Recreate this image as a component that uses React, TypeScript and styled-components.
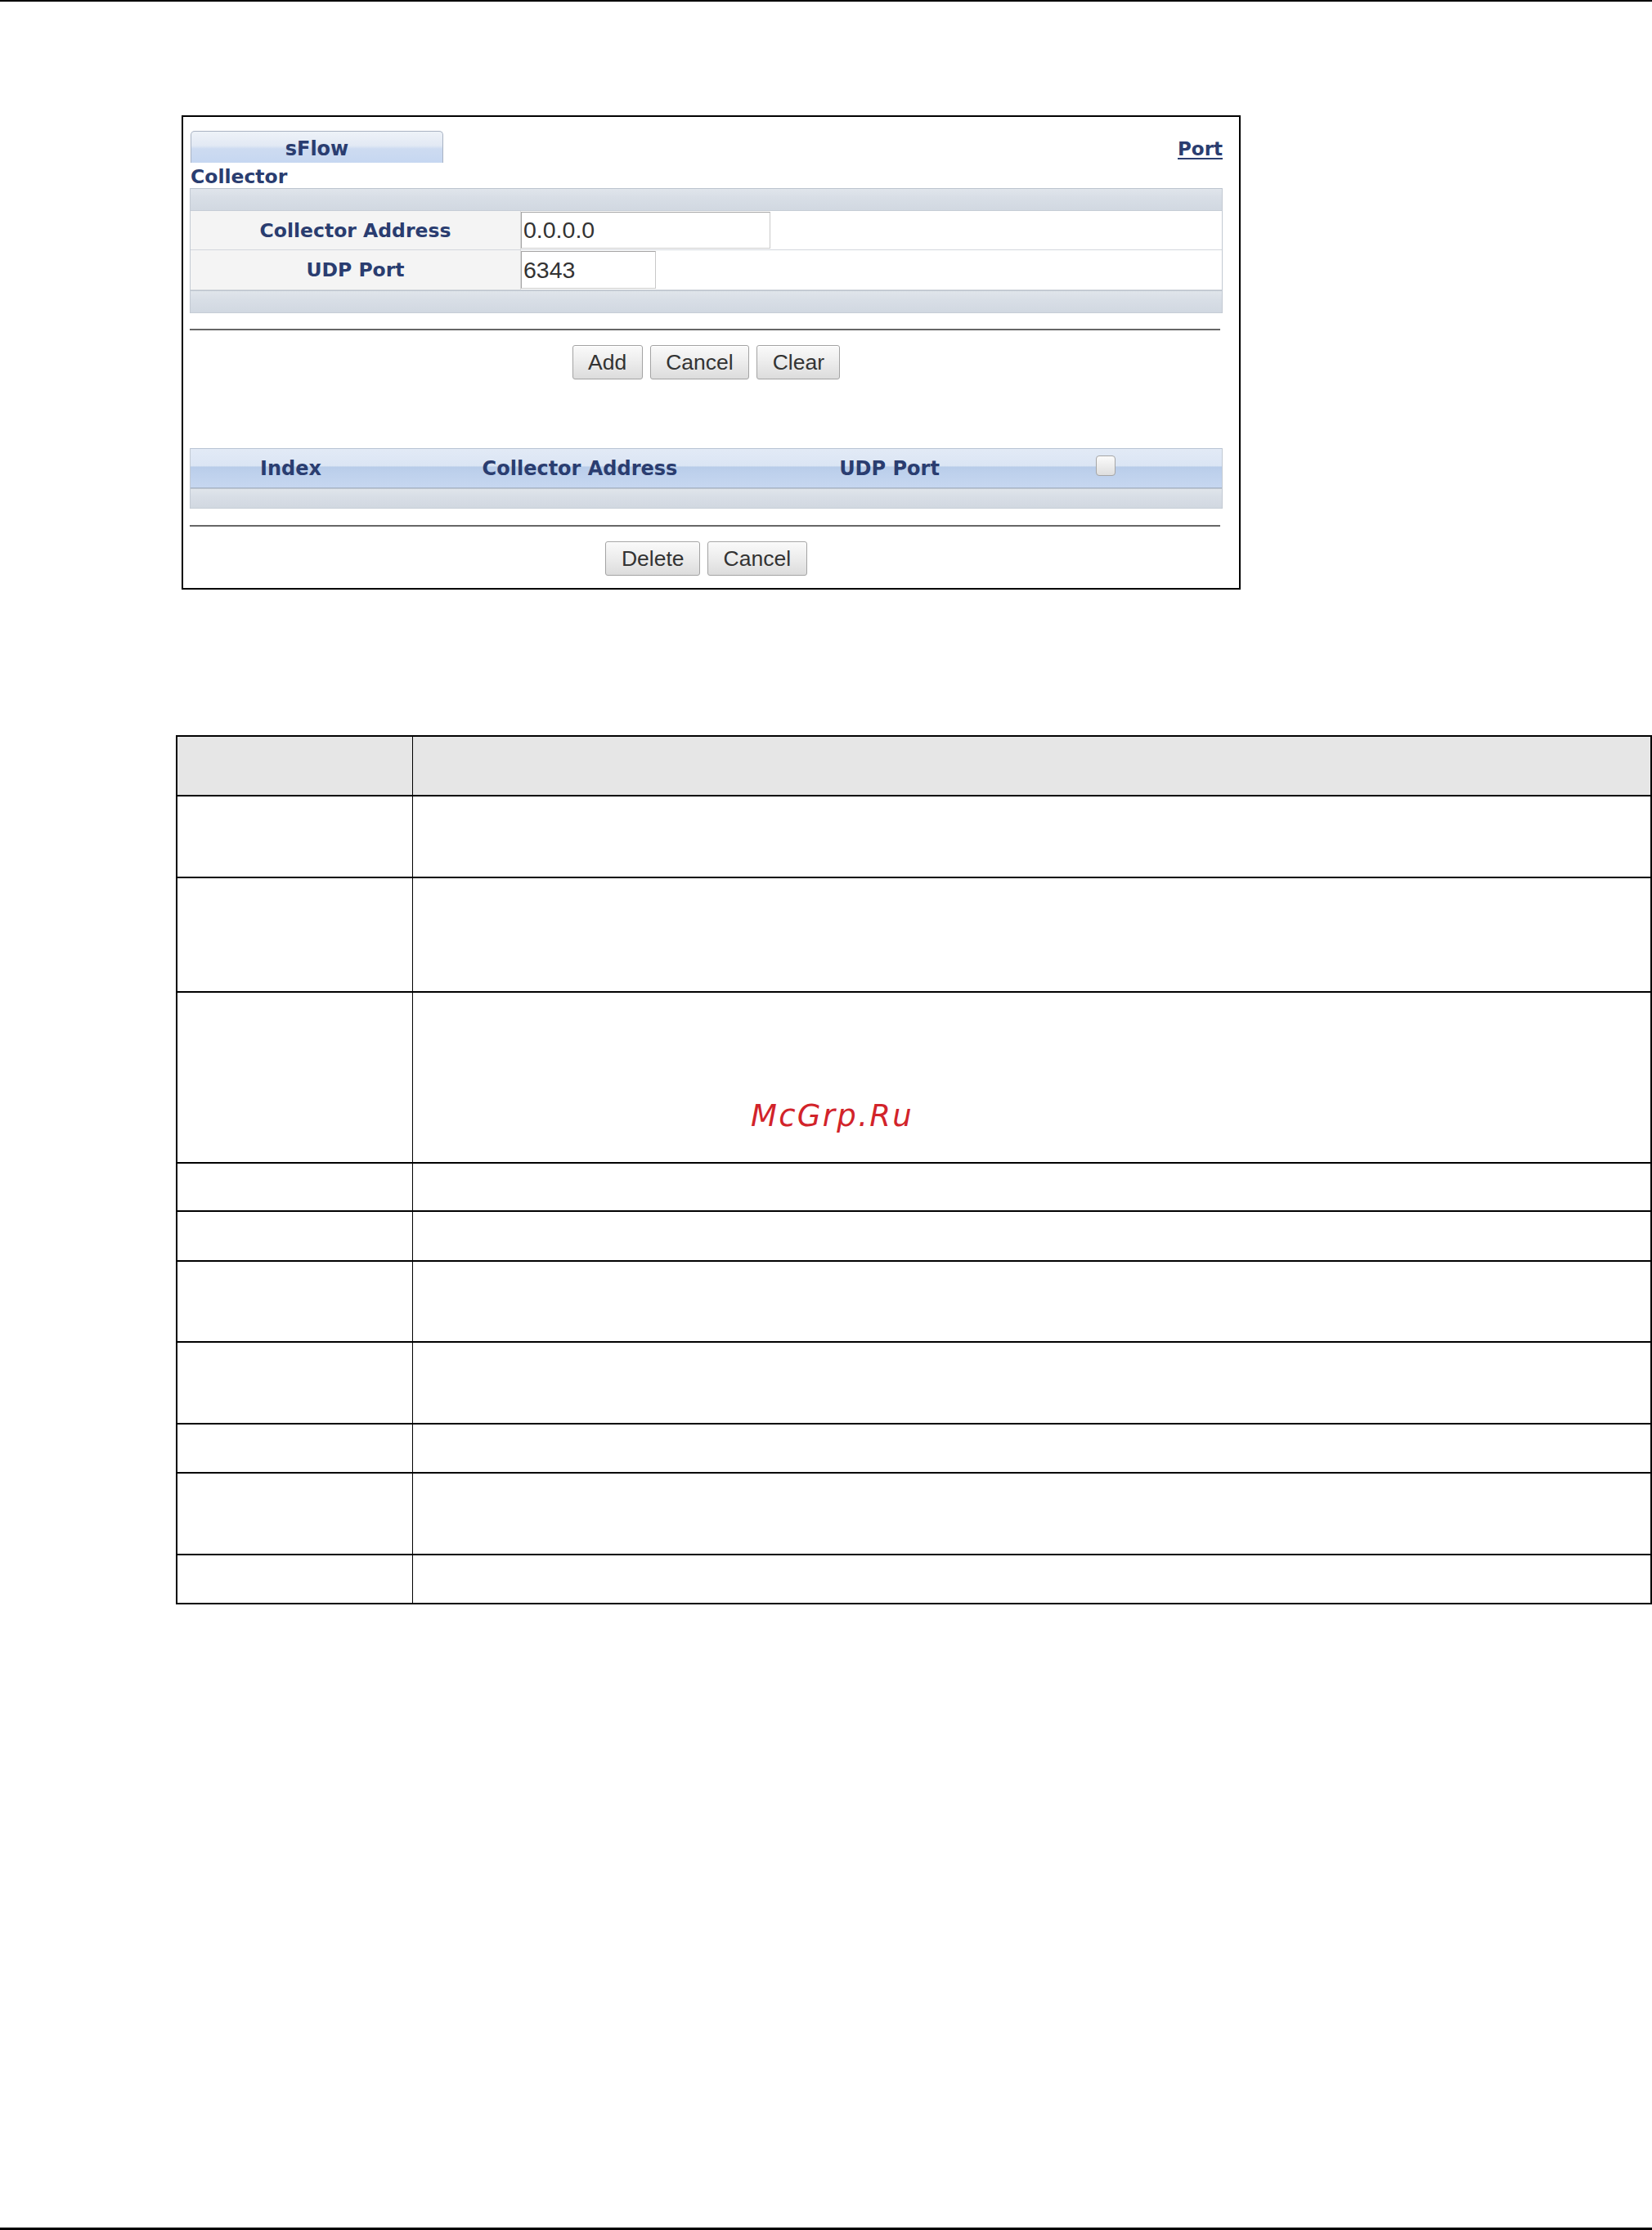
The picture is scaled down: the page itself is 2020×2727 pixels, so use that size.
import styled, { createGlobalStyle } from 'styled-components';

const GlobalStyle = createGlobalStyle`
  body {
    margin: 0;
    background: #fff;
  }
`;

const NAVY = '#2a3d70';

const Page = styled.div`
  box-sizing: border-box;
  width: 2020px;
  height: 2727px;
  padding-top: 139px;
  border-top: 2px solid #000;
  border-bottom: 3px solid #000;
  overflow: hidden;
`;

/* ---------- screenshot of the sFlow page ---------- */

const Frame = styled.div`
  box-sizing: border-box;
  width: 1295px;
  height: 580px;
  margin-left: 222px;
  padding: 17px 20px 15px 8px;
  border: 2px solid #000;
  font-family: 'DejaVu Sans', Verdana, sans-serif;
`;

const TabBar = styled.div`
  display: flex;
  justify-content: space-between;
  align-items: flex-start;
  width: 1263px;
  height: 39px;
`;

const Tab = styled.div`
  box-sizing: border-box;
  width: 309px;
  height: 39px;
  margin-left: 1px;
  padding-top: 3px;
  display: flex;
  align-items: center;
  justify-content: center;
  border: 1px solid #a9b3c3;
  border-bottom: none;
  border-radius: 5px 5px 0 0;
  background: linear-gradient(to bottom, #eef2f8 0%, #e2e9f4 45%, #cddbf1 55%, #c6d7f1 100%);
  color: ${NAVY};
  font-size: 24px;
  font-weight: bold;
`;

const PortLink = styled.a`
  margin-top: 7px;
  line-height: 30px;
  font-size: 23px;
  font-weight: bold;
  color: ${NAVY};
  text-decoration: underline;
  text-underline-offset: 3px;
`;

const SectionTitle = styled.div`
  height: 31px;
  margin-left: 1px;
  line-height: 35px;
  font-size: 23.5px;
  font-weight: bold;
  color: ${NAVY};
`;

const Box = styled.div`
  box-sizing: border-box;
  width: 1263px;
  border-left: 1px solid #c3cad3;
  border-right: 1px solid #c3cad3;
`;

const Band = styled.div<{ $h: number }>`
  box-sizing: border-box;
  height: ${(p) => p.$h}px;
  border-top: 1px solid #bcc4ce;
  border-bottom: 1px solid #c6cdd6;
  background: linear-gradient(to bottom, #e0e5eb 0%, #d8dee6 40%, #d1d8e1 100%);
`;

const FieldRow = styled.div<{ $h: number }>`
  box-sizing: border-box;
  display: grid;
  grid-template-columns: 404px 1fr;
  height: ${(p) => p.$h}px;
  border-bottom: 1px solid #d3d7dc;
`;

const FieldLabel = styled.div`
  display: flex;
  align-items: center;
  justify-content: center;
  background: #f4f4f4;
  border-right: 1px solid #dadada;
  color: ${NAVY};
  font-size: 23.5px;
  font-weight: bold;
`;

const FieldValue = styled.div`
  display: flex;
  align-items: stretch;
  padding: 1px 0;
  background: #fff;
`;

const TextInput = styled.input<{ $w: number }>`
  box-sizing: border-box;
  width: ${(p) => p.$w}px;
  height: 100%;
  margin: 0;
  padding: 0 2px;
  border: 1px solid #a4a4a4;
  border-right-color: #c9c9c9;
  border-bottom-color: #cdcdcd;
  background: #fff;
  color: #333;
  font-family: 'Liberation Sans', Arial, sans-serif;
  font-size: 28.5px;
  outline: none;
`;

const Divider = styled.div<{ $top: number }>`
  width: 1260px;
  margin-top: ${(p) => p.$top}px;
  border-top: 2px solid #666;
`;

const ButtonRow = styled.div`
  display: flex;
  justify-content: center;
  gap: 9px;
  width: 1263px;
  margin-top: 18px;
`;

const Button = styled.button`
  box-sizing: border-box;
  height: 42px;
  padding: 0 18.5px;
  border: 1px solid #a3a3a3;
  border-radius: 3px;
  background: linear-gradient(to bottom, #fafafa 0%, #ececec 50%, #dcdcdc 100%);
  box-shadow: inset 0 1px 0 #fff;
  color: #333;
  font-family: 'Liberation Sans', Arial, sans-serif;
  font-size: 26.5px;
  cursor: pointer;
`;

const ListBox = styled(Box)`
  margin-top: 84px;
`;

const ListHeader = styled.div`
  box-sizing: border-box;
  display: grid;
  grid-template-columns: 245px 462px 295px 234px 1fr;
  align-items: center;
  height: 49px;
  border-top: 1px solid #b8c4d4;
  border-bottom: 1px solid #a9b7cb;
  background: linear-gradient(
    to bottom,
    #e2eaf6 0%,
    #dbe5f4 44%,
    #b8cce9 47%,
    #bdd0ec 60%,
    #c6d7f0 100%
  );
  color: ${NAVY};
  font-size: 24px;
  font-weight: bold;
  text-align: center;
`;

const HeaderCell = styled.div`
  display: flex;
  justify-content: center;
`;

const CheckBox = styled.input`
  appearance: none;
  box-sizing: border-box;
  width: 24px;
  height: 25px;
  margin: 0 0 6px;
  border: 1px solid #a5a5a5;
  border-radius: 4px;
  background: linear-gradient(to bottom, #fbfbfb, #dedede);
`;

/* ---------- field description table ---------- */

const DescTable = styled.div`
  box-sizing: border-box;
  width: 1805px;
  margin-top: 178px;
  margin-left: 215px;
  border-top: 2px solid #000;
  border-left: 2px solid #000;
  border-right: 2px solid #000;
`;

const DescRow = styled.div<{ $h: number; $head?: boolean }>`
  position: relative;
  box-sizing: border-box;
  display: grid;
  grid-template-columns: 287px 1fr;
  height: ${(p) => p.$h}px;
  border-bottom: 2px solid #000;
  background: ${(p) => (p.$head ? '#e6e6e6' : '#fff')};
`;

const DescCell = styled.div`
  & + & {
    border-left: 1px solid #000;
  }
`;

const Watermark = styled.span`
  position: absolute;
  left: 701px;
  top: 132px;
  font-family: 'DejaVu Sans', sans-serif;
  font-style: italic;
  font-size: 37px;
  line-height: 37px;
  letter-spacing: 2.3px;
  color: #d2232a;
`;

const rowHeights = [73, 100, 140, 209, 59, 61, 99, 100, 60, 100, 60];

export default function App(): JSX.Element {
  return (
    <Page>
      <GlobalStyle />
      <Frame>
        <TabBar>
          <Tab>sFlow</Tab>
          <PortLink href="#">Port</PortLink>
        </TabBar>
        <SectionTitle>Collector</SectionTitle>
        <Box>
          <Band $h={28} />
          <FieldRow $h={48}>
            <FieldLabel>Collector Address</FieldLabel>
            <FieldValue>
              <TextInput $w={305} defaultValue="0.0.0.0" />
            </FieldValue>
          </FieldRow>
          <FieldRow $h={49}>
            <FieldLabel>UDP Port</FieldLabel>
            <FieldValue>
              <TextInput $w={165} defaultValue="6343" />
            </FieldValue>
          </FieldRow>
          <Band $h={28} />
        </Box>
        <Divider $top={19} />
        <ButtonRow>
          <Button>Add</Button>
          <Button>Cancel</Button>
          <Button>Clear</Button>
        </ButtonRow>

        <ListBox>
          <ListHeader>
            <HeaderCell>Index</HeaderCell>
            <HeaderCell>Collector Address</HeaderCell>
            <HeaderCell>UDP Port</HeaderCell>
            <HeaderCell>
              <CheckBox type="checkbox" />
            </HeaderCell>
            <div />
          </ListHeader>
          <Band $h={25} />
        </ListBox>
        <Divider $top={20} />
        <ButtonRow>
          <Button>Delete</Button>
          <Button>Cancel</Button>
        </ButtonRow>
      </Frame>

      <DescTable>
        {rowHeights.map((h, i) => (
          <DescRow key={i} $h={h} $head={i === 0}>
            <DescCell />
            <DescCell />
            {i === 3 && <Watermark>McGrp.Ru</Watermark>}
          </DescRow>
        ))}
      </DescTable>
    </Page>
  );
}
